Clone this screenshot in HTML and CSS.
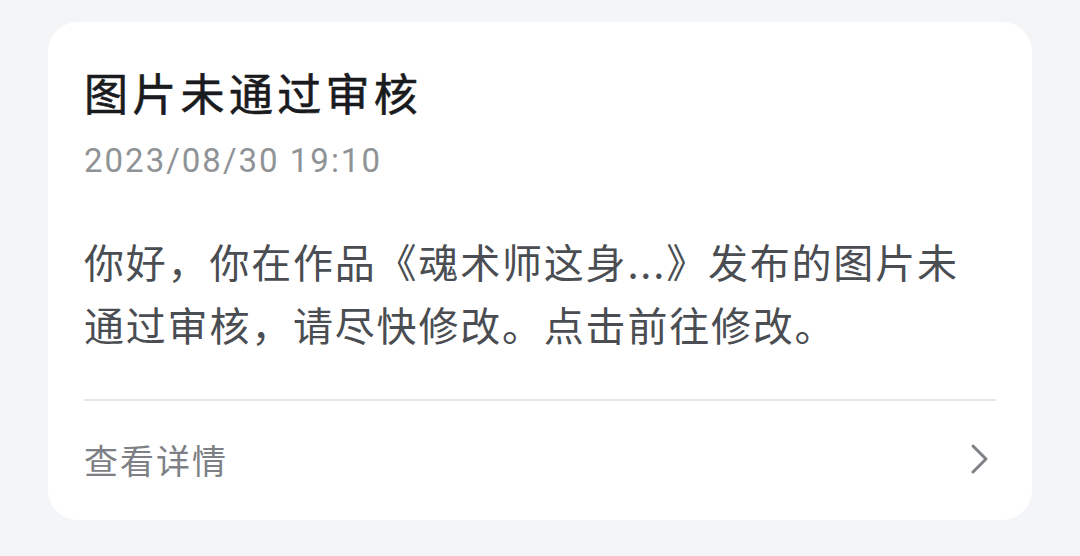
FILE: index.html
```html
<!DOCTYPE html>
<html lang="zh-CN">
<head>
<meta charset="utf-8">
<link rel="stylesheet" href="styles.css">
</head>
<body>
<div class="page">
  <div class="card">
    <div class="title">图片未通过审核</div>
    <div class="date">2023/08/30 19:10</div>
    <div class="body">你好，你在作品《魂术师这身...》发布的图片未<br>通过审核，请尽快修改。点击前往修改。</div>
    <div class="divider"></div>
    <div class="footer">
      <span class="link">查看详情</span>
      <svg class="chev" width="20" height="32" viewBox="0 0 20 32"><path d="M3 3 L16 16 L3 29" fill="none" stroke="#7d8085" stroke-width="3" stroke-linecap="round" stroke-linejoin="round"/></svg>
    </div>
  </div>
</div>
</body>
</html>
```
FILE: styles.css
```css
html, body {
  margin: 0;
  padding: 0;
  background: #f4f5f7;
}
.page {
  width: 1080px;
  height: 556px;
  box-sizing: border-box;
  padding: 22px 48px 36px 48px;
  font-family: "Noto Sans CJK SC", "Noto Sans", sans-serif;
}
.card {
  background: #ffffff;
  border-radius: 30px;
  height: 498px;
  box-sizing: border-box;
  padding: 40px 36px 0 36px;
  display: flex;
  flex-direction: column;
}
.title {
  font-size: 44px;
  line-height: 60px;
  font-weight: 400;
  color: #1a1b1e;
  letter-spacing: 4.3px;
  -webkit-text-stroke: 0.6px #1a1b1e;
}
.date {
  margin-top: 17px;
  font-family: Roboto, "Noto Sans", sans-serif;
  font-size: 33px;
  line-height: 44px;
  color: #909396;
  letter-spacing: 2px;
}
.body {
  margin-top: 47px;
  font-size: 40px;
  line-height: 63px;
  color: #4a4d52;
  letter-spacing: 1.8px;
  white-space: nowrap;
}
.divider {
  margin-top: 43px;
  height: 2px;
  background: #e6e7e9;
}
.footer {
  flex: 1;
  display: flex;
  align-items: center;
  justify-content: space-between;
  padding-bottom: 2px;
}
.link {
  font-size: 34px;
  color: #7d8085;
  letter-spacing: 2px;
}
.chev {
  margin-right: 6px;
  margin-top: -2px;
}
```
